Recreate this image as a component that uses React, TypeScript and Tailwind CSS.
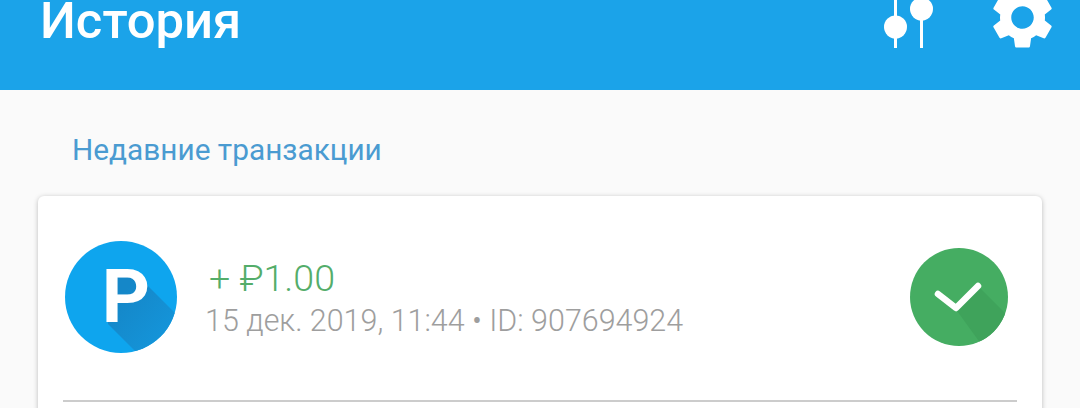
import React from 'react';
import { MdSettings } from 'react-icons/md';

const FiltersIcon = () => (
  <svg width="62" height="48" viewBox="0 0 62 48" className="text-white">
    <rect x="13" y="0" width="3" height="48" fill="currentColor" />
    <rect x="39" y="0" width="3" height="48" fill="currentColor" />
    <circle cx="14.5" cy="27" r="11.5" fill="currentColor" />
    <circle cx="40.5" cy="9" r="11.5" fill="currentColor" />
  </svg>
);

const ParkIcon = () => (
  <svg width="114" height="114" viewBox="0 0 114 114" className="shrink-0">
    <defs>
      <clipPath id="park-clip">
        <circle cx="57" cy="57" r="56" />
      </clipPath>
      <linearGradient id="park-shadow" x1="0.2" y1="0.2" x2="0.9" y2="0.9">
        <stop offset="0" stopColor="#1587c8" />
        <stop offset="1" stopColor="#149be2" />
      </linearGradient>
    </defs>
    <circle cx="57" cy="57" r="56" fill="#0ea5ee" />
    <polygon points="44,30 80,42 130,92 90,130 44,84" fill="url(#park-shadow)" clipPath="url(#park-clip)" />
    <text x="62" y="82" textAnchor="middle" fontFamily="Roboto, sans-serif" fontWeight="700" fontSize="75" fill="#ffffff">P</text>
  </svg>
);

const DoneIcon = () => (
  <svg width="100" height="100" viewBox="0 0 100 100" className="shrink-0">
    <defs>
      <clipPath id="done-clip">
        <circle cx="50" cy="50" r="49" />
      </clipPath>
    </defs>
    <circle cx="50" cy="50" r="49" fill="#45ad62" />
    <polygon points="46,61 69,39 115,85 85,115" fill="#3fa35b" clipPath="url(#done-clip)" />
    <path d="M29 47 L47 61 L69 39" fill="none" stroke="#ffffff" strokeWidth="6.5" strokeLinecap="round" strokeLinejoin="round" />
  </svg>
);

export default function App() {
  return (
    <div className="h-[408px] overflow-hidden bg-[#fafafa] font-['Roboto',sans-serif]">
      <header className="h-[90px] overflow-hidden bg-[#1ba3e9] flex items-start justify-between pl-[40px] pr-[20px] text-white">
        <h1 className="text-[50.8px] leading-[42px] font-medium">История</h1>
        <div className="flex items-start gap-[42px]">
          <FiltersIcon />
          <MdSettings className="-mt-[20px] text-[75px]" />
        </div>
      </header>

      <h2 className="pl-[72px] pt-[42px] pb-[29px] text-[29.8px] leading-[35px] text-[#4a9bd1]">Недавние транзакции</h2>

      <div className="mx-[38px] h-[260px] bg-white rounded-[6px] shadow-[0_1px_5px_rgba(0,0,0,0.25)] px-[25px]">
        <div className="h-[206px] pb-[2px] flex items-center justify-between border-b-2 border-[#cccccc] pr-[8px]">
          <div className="flex items-center gap-[27px] ml-[1px]">
            <ParkIcon />
            <div className="flex flex-col pt-[2px]">
              <span className="pl-[4px] text-[37.6px] leading-[42px] font-light text-[#54ad6a]">+ ₽1.00</span>
              <span className="mt-[3px] text-[30.45px] leading-[38px] font-light text-[#9e9e9e]">15 дек. 2019, 11:44 • ID: 907694924</span>
            </div>
          </div>
          <DoneIcon />
        </div>
      </div>
    </div>
  );
}
